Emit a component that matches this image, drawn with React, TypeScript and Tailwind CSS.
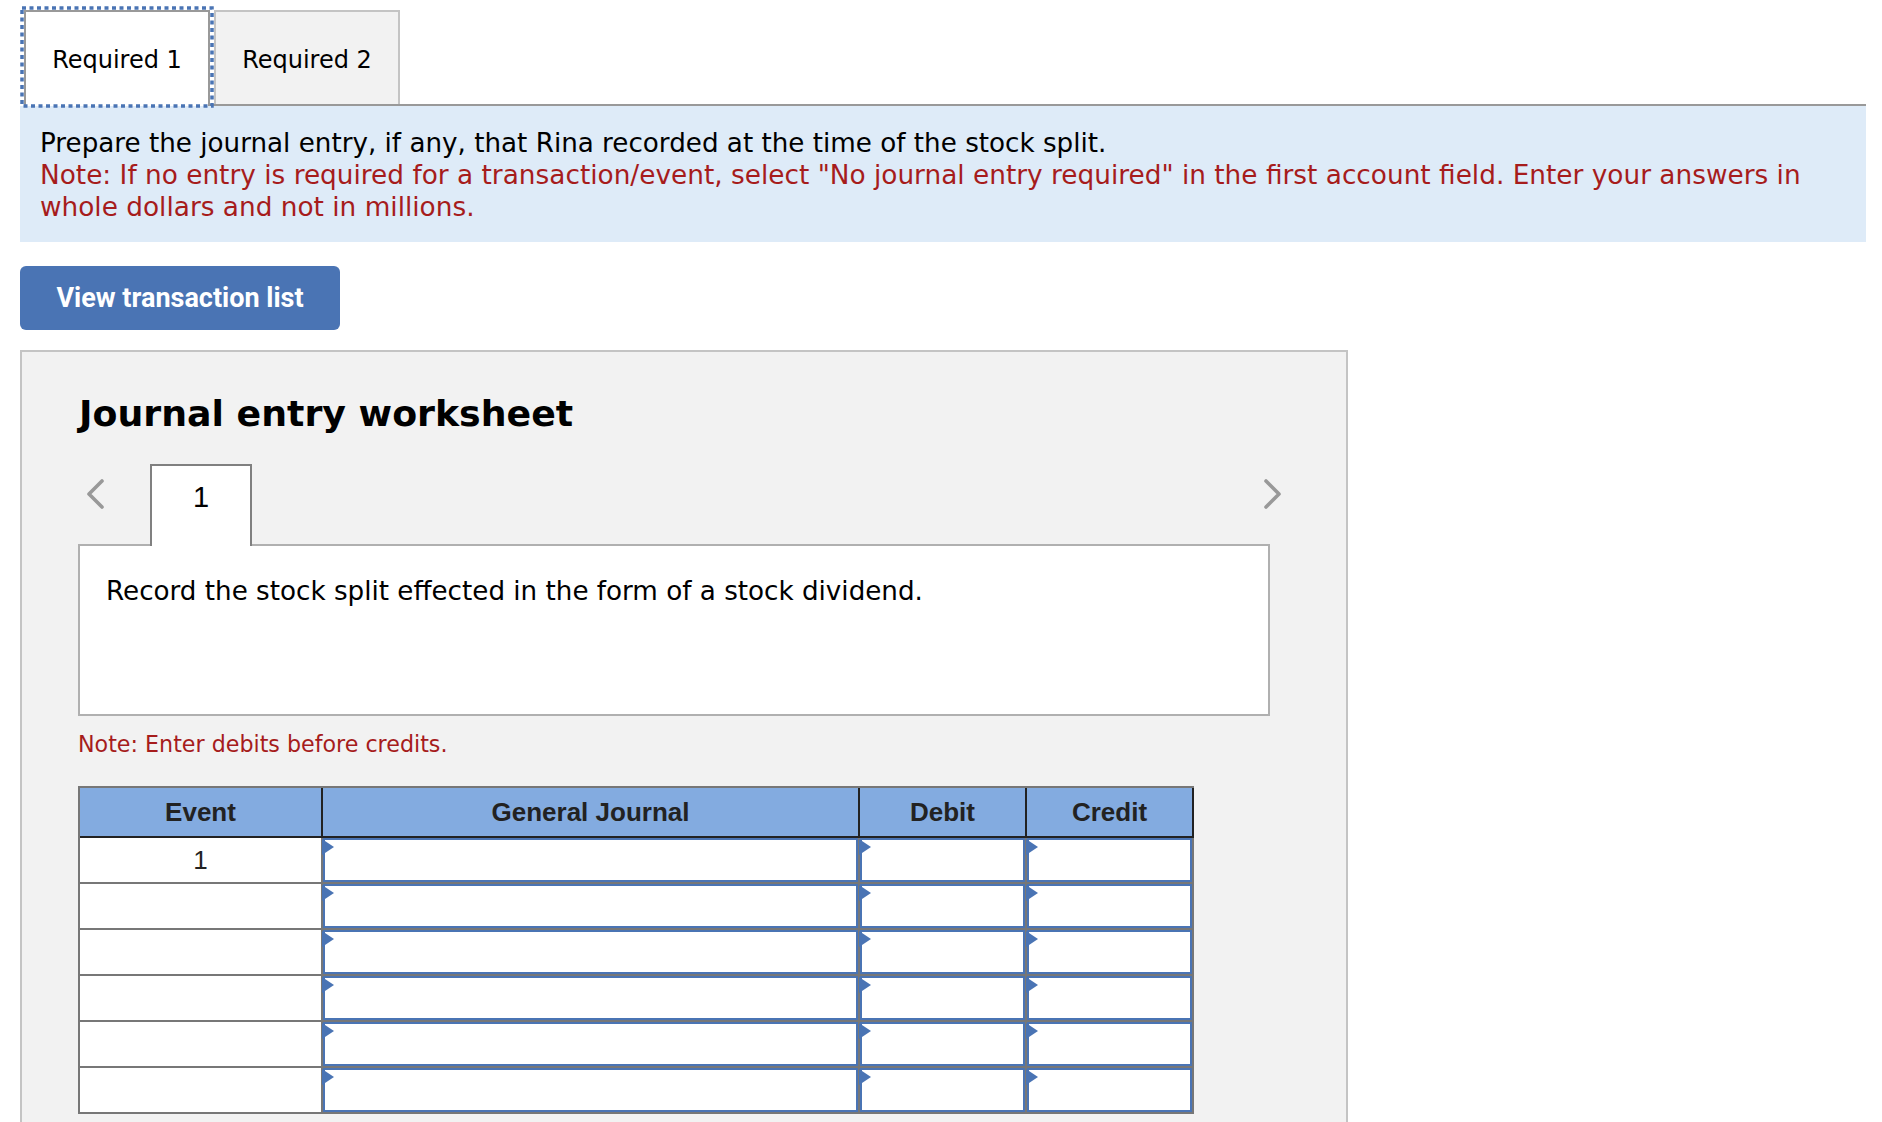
export default function App() {
  const rows = [0, 1, 2, 3, 4, 5];
  const InputCell = () => (
    <div className="relative h-full border-r-2 border-[#777]">
      <div className="h-full border-2 border-[#4a74b4] bg-white" />
      <svg className="absolute -left-px top-px" width="12" height="16" viewBox="0 0 12 16">
        <path d="M0 0 L12 8 L0 16 Z" fill="#4a74b4" />
      </svg>
    </div>
  );
  return (
    <div className="h-[1122px] overflow-hidden bg-white text-black font-['DejaVu_Sans',sans-serif]">
      <div className="mr-[16px] flex h-[106px] pl-[24px] pt-[10px]">
        <div className="relative flex h-[96px] w-[186px] items-center justify-center border-2 border-b-0 border-[#999] bg-white pt-px text-[24px]">
          Required 1
          <svg className="pointer-events-none absolute -left-[6px] -top-[6px]" width="194" height="102" viewBox="0 0 194 102" fill="none">
            <rect x="2" y="2" width="190" height="98" stroke="#4a74b4" strokeWidth="3.5" strokeDasharray="4 3.5" />
          </svg>
        </div>
        <div className="flex flex-1 items-start border-b-2 border-[#999] pl-[4px]">
          <div className="flex h-[94px] w-[186px] items-center justify-center border-2 border-b-0 border-[#c4c4c4] bg-[#f2f2f2] pt-[3px] text-[24px]">
            Required 2
          </div>
        </div>
      </div>
      <div className="ml-[20px] mr-[16px] h-[136px] bg-[#deebf8] pl-[20px] pr-[30px] pt-[21px] leading-[32.2px]">
        <div className="text-[26.2px]">Prepare the journal entry, if any, that Rina recorded at the time of the stock split.</div>
        <div className="text-[26.35px] text-[#a61c1c]">
          Note: If no entry is required for a transaction/event, select "No journal entry required" in the first account field. Enter your answers in whole dollars and not in millions.
        </div>
      </div>
      <button className="ml-[20px] mt-[24px] flex h-[64px] w-[320px] items-center justify-center rounded-[6px] bg-[#4a74b4] font-['Roboto',sans-serif] text-[27px] font-bold text-white">
        View transaction list
      </button>
      <div className="ml-[20px] mt-[20px] h-[900px] w-[1328px] border-2 border-[#c4c4c4] bg-[#f2f2f2] pl-[56px] pt-[38px]">
        <h1 className="ml-px text-[36.3px] font-bold leading-[47px]">Journal entry worksheet</h1>
        <div className="relative z-10 -mb-[2px] mt-[27px] flex h-[82px] w-[1204px] items-start">
          <svg className="ml-[8px] mt-[15px]" width="18" height="30" viewBox="0 0 18 30" fill="none">
            <path d="M16 2 L3 15 L16 28" stroke="#999" strokeWidth="3.6" strokeLinecap="round" strokeLinejoin="round" />
          </svg>
          <div className="ml-[46px] flex h-[82px] w-[102px] items-start justify-center border-2 border-b-0 border-[#808080] bg-white pt-[15px] font-['Liberation_Sans',sans-serif] text-[29px] leading-[32px]">
            1
          </div>
          <svg className="ml-auto mt-[15px]" width="18" height="30" viewBox="0 0 18 30" fill="none">
            <path d="M2 2 L15 15 L2 28" stroke="#999" strokeWidth="3.6" strokeLinecap="round" strokeLinejoin="round" />
          </svg>
        </div>
        <div className="h-[172px] w-[1192px] border-2 border-[#b0b0b0] bg-white pl-[26px] pt-[29px] text-[26.2px] leading-[32px]">
          Record the stock split effected in the form of a stock dividend.
        </div>
        <div className="mt-[14px] text-[22.2px] leading-[29px] text-[#a61c1c]">Note: Enter debits before credits.</div>
        <div className="mt-[27px] w-[1116px] border-l-2 border-t-2 border-[#777] font-['Liberation_Sans',sans-serif] text-[26px]">
          <div className="grid h-[50px] grid-cols-[243px_537px_167px_167px] border-b-2 border-[#222] bg-[#83abe0] text-center font-bold leading-[48px] text-[#222]">
            <div className="border-r-2 border-[#222]">Event</div>
            <div className="border-r-2 border-[#222]">General Journal</div>
            <div className="border-r-2 border-[#222]">Debit</div>
            <div className="border-r-2 border-[#222]">Credit</div>
          </div>
          {rows.map((r) => (
            <div key={r} className="grid h-[46px] grid-cols-[243px_537px_167px_167px] border-b-2 border-[#777]">
              <div className="border-r-2 border-[#777] bg-white text-center leading-[44px] text-[#222]">{r === 0 ? "1" : ""}</div>
              <InputCell />
              <InputCell />
              <InputCell />
            </div>
          ))}
        </div>
      </div>
    </div>
  );
}
